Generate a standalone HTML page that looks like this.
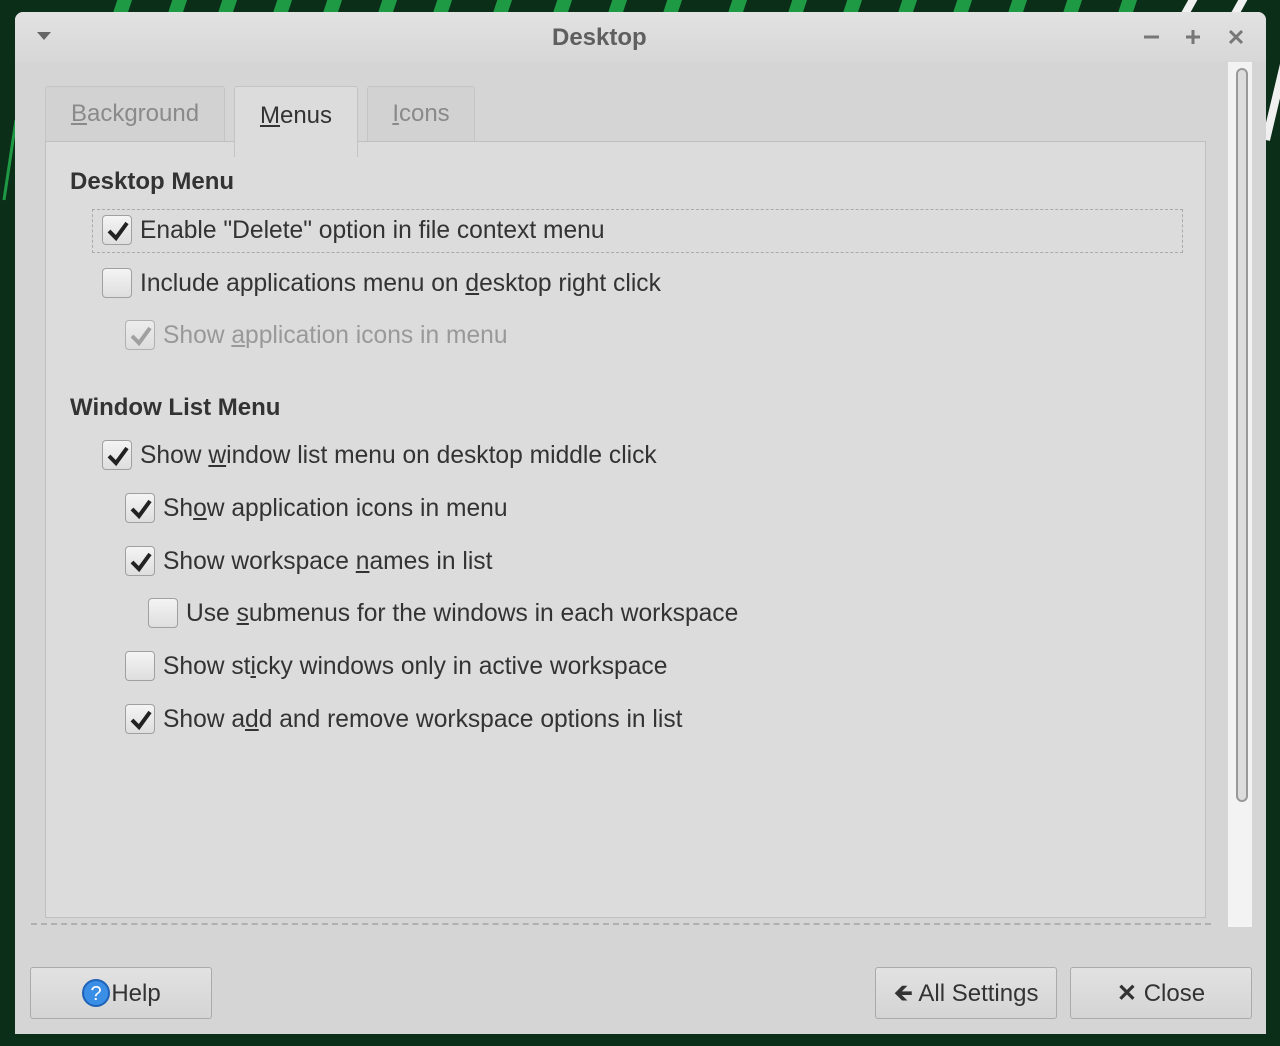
<!DOCTYPE html>
<html><head><style>
body{margin:0;width:1280px;height:1046px;overflow:hidden;background:#0a2e17;font-family:"Liberation Sans",sans-serif;position:relative}
.win{position:absolute;left:15px;top:12px;width:1251px;height:1022px;background:#d5d5d5;border-radius:8px 8px 0 0;}
.title{position:absolute;left:0;top:0;width:100%;height:50px;background:linear-gradient(#e2e2e2,#d7d7d7);border-radius:8px 8px 0 0}
.title span{position:absolute;left:537px;top:0;line-height:52px;font-size:24px;font-weight:bold;color:#5f5f5f}
.tab{position:absolute;top:74px;height:68px;border:1px solid #c4c4c4;border-bottom:none;background:#d2d2d2;font-size:24px;color:#8a8a8a;text-align:center;line-height:54px;border-radius:3px 3px 0 0}
.panel{position:absolute;left:30px;top:129px;width:1159px;height:775px;border:1px solid #c0c0c0;background:#dcdcdc}
.h{position:absolute;font-size:24px;font-weight:bold;color:#333}
.row{position:absolute;font-size:24.6px;color:#333;white-space:nowrap;height:30px;line-height:30px}
.cb{display:inline-block;width:30px;height:30px;border:1px solid #a0a0a0;border-radius:4px;background:linear-gradient(#f4f4f4,#dedede);vertical-align:middle;margin-right:8px;position:relative;top:-2px;box-sizing:border-box}
.cb svg{position:absolute;left:3px;top:3px}
.dis{color:#999}
.btn{position:absolute;top:954px;height:52px;border:1px solid #aaa;border-radius:3px;background:linear-gradient(#e2e2e2,#d4d4d4);font-size:24px;color:#333;line-height:52px;text-align:center;box-sizing:border-box}
u{text-decoration:underline}
</style></head><body>
<svg style="position:absolute;left:0;top:0" width="1280" height="1046">
<g stroke="#1f9a44" stroke-width="14">
<line x1="120" y1="14" x2="126" y2="-4"/><line x1="175" y1="14" x2="181" y2="-4"/><line x1="225" y1="14" x2="231" y2="-4"/><line x1="280" y1="14" x2="286" y2="-4"/><line x1="330" y1="14" x2="336" y2="-4"/><line x1="385" y1="14" x2="391" y2="-4"/><line x1="440" y1="14" x2="446" y2="-4"/><line x1="500" y1="14" x2="506" y2="-4"/><line x1="560" y1="14" x2="566" y2="-4"/><line x1="615" y1="14" x2="621" y2="-4"/><line x1="670" y1="14" x2="676" y2="-4"/><line x1="735" y1="14" x2="741" y2="-4"/><line x1="795" y1="14" x2="801" y2="-4"/><line x1="850" y1="14" x2="856" y2="-4"/><line x1="905" y1="14" x2="911" y2="-4"/><line x1="960" y1="14" x2="966" y2="-4"/><line x1="1015" y1="14" x2="1021" y2="-4"/><line x1="1070" y1="14" x2="1076" y2="-4"/><line x1="1125" y1="14" x2="1131" y2="-4"/>
</g>
<g stroke="#f0f0f0" stroke-width="8"><line x1="1185" y1="14" x2="1195" y2="-4"/><line x1="1235" y1="14" x2="1245" y2="-4"/><line x1="1266" y1="140" x2="1285" y2="60"/></g>
<line x1="4" y1="200" x2="16" y2="120" stroke="#1f9a44" stroke-width="3"/>
</svg>
<div class="win">
<div class="title"><span>Desktop</span></div>
<svg style="position:absolute;left:22px;top:20px" width="14" height="10"><path d="M0 0H14L7 8Z" fill="#666"/></svg>
<svg style="position:absolute;left:1127px;top:16px" width="110" height="20" stroke="#777" stroke-width="3"><line x1="2" y1="9" x2="17" y2="9"/><line x1="44" y1="9" x2="58" y2="9"/><line x1="51" y1="2" x2="51" y2="16"/><line x1="88" y1="3" x2="100" y2="15"/><line x1="100" y1="3" x2="88" y2="15"/></svg>
<div style="position:absolute;left:1213px;top:50px;width:24px;height:865px;background:#f3f3f3"></div>
<div style="position:absolute;left:1221px;top:56px;width:12px;height:734px;border:2px solid #999;border-radius:8px;background:#ddd;box-sizing:border-box"></div>
<div class="tab" style="left:30px;width:178px"><u>B</u>ackground</div>
<div class="tab" style="left:352px;width:106px"><u>I</u>cons</div>
<div class="panel"></div>
<div class="tab" style="left:219px;width:122px;top:74px;height:70px;background:#dcdcdc;color:#333;line-height:58px;z-index:2"><u>M</u>enus</div>
<div style="position:absolute;left:16px;top:911px;width:1180px;border-top:2px dashed #b0b0b0"></div>
</div>
<div class="h" style="left:70px;top:168px">Desktop Menu</div>
<div style="position:absolute;left:92px;top:209px;width:1089px;height:42px;border:1px dashed #aaa"></div>
<div class="row" style="left:102px;top:216px"><span class="cb"><svg width="24" height="24"><path d="M3 12L10 19L21 4" stroke="#222" stroke-width="4" fill="none"/></svg></span>Enable "Delete" option in file context menu</div>
<div class="row" style="left:102px;top:269px"><span class="cb"></span>Include applications menu on <u>d</u>esktop right click</div>
<div class="row dis" style="left:125px;top:321px"><span class="cb" style="opacity:.7"><svg width="24" height="24"><path d="M3 12L10 19L21 4" stroke="#888" stroke-width="4" fill="none"/></svg></span>Show <u>a</u>pplication icons in menu</div>
<div class="h" style="left:70px;top:394px">Window List Menu</div>
<div class="row" style="left:102px;top:441px"><span class="cb"><svg width="24" height="24"><path d="M3 12L10 19L21 4" stroke="#222" stroke-width="4" fill="none"/></svg></span>Show <u>w</u>indow list menu on desktop middle click</div>
<div class="row" style="left:125px;top:494px"><span class="cb"><svg width="24" height="24"><path d="M3 12L10 19L21 4" stroke="#222" stroke-width="4" fill="none"/></svg></span>Sh<u>o</u>w application icons in menu</div>
<div class="row" style="left:125px;top:547px"><span class="cb"><svg width="24" height="24"><path d="M3 12L10 19L21 4" stroke="#222" stroke-width="4" fill="none"/></svg></span>Show workspace <u>n</u>ames in list</div>
<div class="row" style="left:148px;top:599px"><span class="cb"></span>Use <u>s</u>ubmenus for the windows in each workspace</div>
<div class="row" style="left:125px;top:652px"><span class="cb"></span>Show st<u>i</u>cky windows only in active workspace</div>
<div class="row" style="left:125px;top:705px"><span class="cb"><svg width="24" height="24"><path d="M3 12L10 19L21 4" stroke="#222" stroke-width="4" fill="none"/></svg></span>Show a<u>d</u>d and remove workspace options in list</div>
<div class="btn" style="left:30px;top:967px;width:182px"><svg width="30" height="30" style="vertical-align:middle;position:relative;top:-2px"><circle cx="15" cy="15" r="13" fill="#3a8ee6" stroke="#1e63b8" stroke-width="2"/><text x="15" y="22" font-size="20" fill="#fff" text-anchor="middle" font-family="Liberation Sans">?</text></svg>Help</div>
<div class="btn" style="left:875px;top:967px;width:182px"><span style="font-size:24px">🡸</span> All Settings</div>
<div class="btn" style="left:1070px;top:967px;width:182px"><b>✕</b> Close</div>
</body></html>
